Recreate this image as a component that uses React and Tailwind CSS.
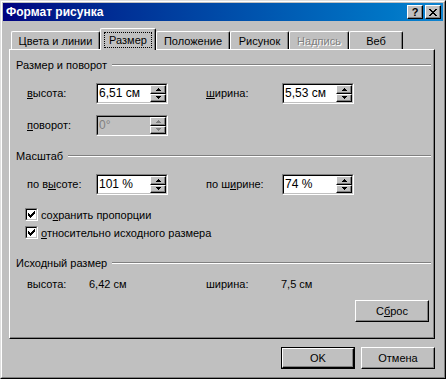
import React from "react";

function Px({ rows, color = "#000", className = "" }) {
  const rects = [];
  rows.forEach((r, y) =>
    [...r].forEach((c, x) => {
      if (c === "X") rects.push(<rect key={x + "-" + y} x={x} y={y} width="1" height="1" />);
    })
  );
  return (
    <svg width={rows[0].length} height={rows.length} fill={color} shapeRendering="crispEdges" className={className}>
      {rects}
    </svg>
  );
}

const UP = ["..X..", ".XXX.", "XXXXX"];
const DOWN = ["XXXXX", ".XXX.", "..X.."];
const CLOSE = ["XX....XX", ".XX..XX.", "..XXXX..", "...XX...", "..XXXX..", ".XX..XX.", "XX....XX"];
const CHECK = ["......X", ".....XX", "X...XXX", "XX.XXX.", "XXXXX..", ".XXX...", "..X...."];

function SpinBtn({ up, disabled }) {
  return (
    <div className="flex-1 flex items-center justify-center bg-[#c0c0c0] border-t border-l border-t-white border-l-white border-b border-r border-b-black border-r-black shadow-[inset_-1px_-1px_#808080]">
      <Px rows={up ? UP : DOWN} color={disabled ? "#808080" : "#000"} />
    </div>
  );
}

function Spin({ value, disabled }) {
  return (
    <div className="w-[72px] h-[21px] border-t border-l border-t-[#808080] border-l-[#808080] border-b border-r border-b-white border-r-white">
      <div
        className={
          disabled
            ? "flex h-full border-t border-l border-t-black border-l-black border-b border-r border-b-[#c0c0c0] border-r-[#c0c0c0] bg-[#c0c0c0]"
            : "flex h-full border-t border-l border-t-black border-l-black border-b border-r border-b-[#c0c0c0] border-r-[#c0c0c0] bg-white"
        }
      >
        <div
          className={
            disabled
              ? "flex-1 pl-[1px] text-[12px] leading-[17px] text-[#808080]"
              : "flex-1 pl-[1px] text-[12px] leading-[17px] text-black"
          }
        >
          {value}
        </div>
        <div className="flex flex-col w-[16px]">
          <SpinBtn up disabled={disabled} />
          <SpinBtn disabled={disabled} />
        </div>
      </div>
    </div>
  );
}

function Header({ children }) {
  return (
    <div className="flex items-center h-[14px] pl-[6px] pr-[2px]">
      <span className="leading-[14px] whitespace-nowrap">{children}</span>
      <div className="flex-1 ml-[5px] h-[2px] border-t border-t-[#808080] border-b border-b-white" />
    </div>
  );
}

function Check({ children }) {
  return (
    <div className="flex items-center h-[13px] pl-[15px]">
      <div className="w-[13px] h-[13px] border-t border-l border-t-[#808080] border-l-[#808080] border-b border-r border-b-white border-r-white">
        <div className="w-full h-full bg-white flex items-center justify-center border-t border-l border-t-black border-l-black border-b border-r border-b-[#c0c0c0] border-r-[#c0c0c0]">
          <Px rows={CHECK} />
        </div>
      </div>
      <span className="ml-[3px] leading-[14px] whitespace-nowrap">{children}</span>
    </div>
  );
}

function Button({ children, isDefault }) {
  const inner = (
    <div className="w-full h-full flex items-center justify-center border-t border-l border-t-white border-l-white border-b border-r border-b-black border-r-black shadow-[inset_-1px_-1px_#808080]">
      {children}
    </div>
  );
  if (isDefault) {
    return <div className="w-[74px] h-[22px] border border-black">{inner}</div>;
  }
  return <div className="w-[74px] h-[22px]">{inner}</div>;
}

function Tab({ w, children, disabled }) {
  return (
    <div
      style={{ width: w }}
      className="h-[18px] flex items-center justify-center rounded-tl-[2px] rounded-tr-[2px] border-t border-l border-t-white border-l-white border-r border-r-black shadow-[inset_-1px_0_#808080]"
    >
      <span className={disabled ? "text-[#808080] [text-shadow:1px_1px_0_#fff] leading-[14px]" : "leading-[14px]"}>
        {children}
      </span>
    </div>
  );
}

export default function App() {
  return (
    <div className="w-[446px] h-[379px] bg-[#c0c0c0] text-[11px] text-black font-['Liberation_Sans',Arial,sans-serif] border border-t-[#dfdfdf] border-l-[#dfdfdf] border-r-black border-b-black">
      <div className="h-full flex flex-col p-[1px] border border-t-white border-l-white border-r-[#808080] border-b-[#808080]">
        {/* Title bar */}
        <div className="h-[18px] flex items-center justify-between bg-gradient-to-r from-[#000080] to-[#1084d0] pl-[3px] pr-[2px]">
          <span className="text-white font-bold text-[12px] leading-[14px] whitespace-nowrap">Формат рисунка</span>
          <div className="flex gap-[2px]">
            <div className="w-[16px] h-[14px] flex items-center justify-center bg-[#c0c0c0] border-t border-l border-t-white border-l-white border-b border-r border-b-black border-r-black shadow-[inset_-1px_-1px_#808080]">
              <span className="font-bold text-[11px] leading-[11px] text-black">?</span>
            </div>
            <div className="w-[16px] h-[14px] flex items-center justify-center bg-[#c0c0c0] border-t border-l border-t-white border-l-white border-b border-r border-b-black border-r-black shadow-[inset_-1px_-1px_#808080]">
              <Px rows={CLOSE} />
            </div>
          </div>
        </div>

        {/* Client */}
        <div className="flex-1 px-[6px] pt-[7px]">
          {/* Tabs */}
          <div className="flex items-end h-[21px] pl-[2px]">
            <Tab w={89}>Цвета и линии</Tab>
            <div className="relative z-10 w-[56px] h-[22px] mb-[-1px] bg-[#c0c0c0] flex items-center justify-center rounded-tl-[2px] rounded-tr-[2px] border-t border-l border-t-white border-l-white border-r border-r-black shadow-[inset_-1px_0_#808080]">
              <span className="leading-[14px] px-[4px] border border-dotted border-black">Размер</span>
            </div>
            <Tab w={74}>Положение</Tab>
            <Tab w={59}>Рисунок</Tab>
            <Tab w={60} disabled>
              Надпись
            </Tab>
            <Tab w={54}>Веб</Tab>
          </div>

          {/* Panel */}
          <div className="w-[426px] h-[290px] border-t border-l border-t-white border-l-white border-r border-b border-r-black border-b-black">
            <div className="h-full flex flex-col border-r border-b border-r-[#808080] border-b-[#808080]">
              <div className="mt-[8px]">
                <Header>Размер и поворот</Header>
              </div>
              <div className="flex items-center h-[21px] mt-[11px]">
                <div className="w-[86px] pl-[17px]">
                  <u>в</u>ысота:
                </div>
                <Spin value="6,51 см" />
                <div className="w-[114px] pl-[38px]">
                  <u>ш</u>ирина:
                </div>
                <Spin value="5,53 см" />
              </div>
              <div className="flex items-center h-[21px] mt-[11px]">
                <div className="w-[86px] pl-[17px]">
                  <u>п</u>оворот:
                </div>
                <Spin value="0°" disabled />
              </div>

              <div className="mt-[13px]">
                <Header>Масштаб</Header>
              </div>
              <div className="flex items-center h-[21px] mt-[11px]">
                <div className="w-[86px] pl-[17px]">
                  по в<u>ы</u>соте:
                </div>
                <Spin value="101 %" />
                <div className="w-[114px] pl-[38px]">
                  по ш<u>и</u>рине:
                </div>
                <Spin value="74 %" />
              </div>
              <div className="mt-[13px]">
                <Check>
                  со<u>х</u>ранить пропорции
                </Check>
              </div>
              <div className="mt-[5px]">
                <Check>
                  <u>о</u>тносительно исходного размера
                </Check>
              </div>

              <div className="mt-[17px]">
                <Header>Исходный размер</Header>
              </div>
              <div className="flex items-center h-[14px] mt-[7px] leading-[14px]">
                <div className="w-[79px] pl-[17px]">высота:</div>
                <div className="w-[117px]">6,42 см</div>
                <div className="w-[75px]">ширина:</div>
                <div>7,5 см</div>
              </div>
              <div className="flex justify-end mt-[9px] pr-[4px]">
                <Button>
                  С<u>б</u>рос
                </Button>
              </div>
            </div>
          </div>

          {/* Bottom buttons */}
          <div className="w-[426px] flex justify-end gap-[6px] mt-[8px]">
            <Button isDefault>OK</Button>
            <Button>Отмена</Button>
          </div>
        </div>
      </div>
    </div>
  );
}
